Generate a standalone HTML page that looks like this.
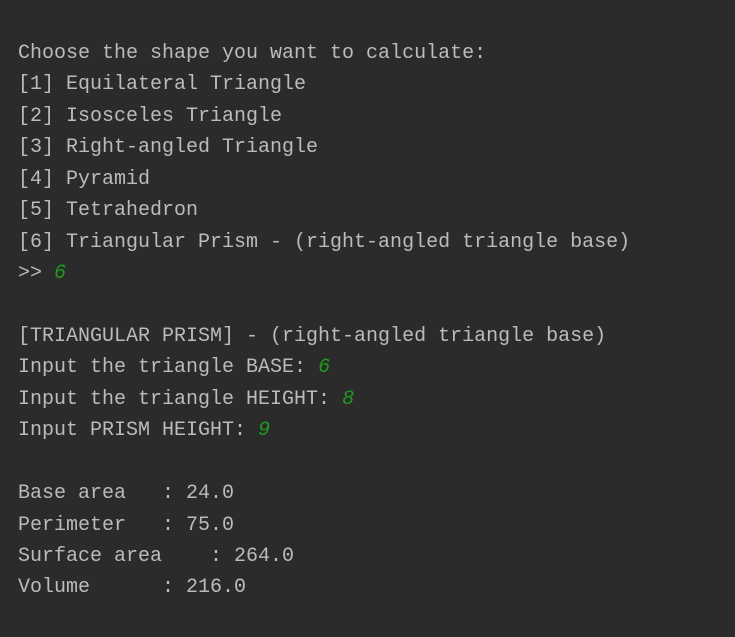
<!DOCTYPE html>
<html><head><meta charset="utf-8"><style>
html,body{margin:0;padding:0;background:#2b2b2b;width:735px;height:637px;overflow:hidden}
pre{margin:0;position:absolute;left:18px;top:38px;font-family:"Liberation Mono","DejaVu Sans Mono",monospace;font-size:20px;line-height:31.43px;color:#bbbbbb;white-space:pre}
i{color:#1e9a1e;font-style:italic}
</style></head><body><pre>Choose the shape you want to calculate:
[1] Equilateral Triangle
[2] Isosceles Triangle
[3] Right-angled Triangle
[4] Pyramid
[5] Tetrahedron
[6] Triangular Prism - (right-angled triangle base)
&gt;&gt; <i>6</i>

[TRIANGULAR PRISM] - (right-angled triangle base)
Input the triangle BASE: <i>6</i>
Input the triangle HEIGHT: <i>8</i>
Input PRISM HEIGHT: <i>9</i>

Base area   : 24.0
Perimeter   : 75.0
Surface area    : 264.0
Volume      : 216.0</pre></body></html>
